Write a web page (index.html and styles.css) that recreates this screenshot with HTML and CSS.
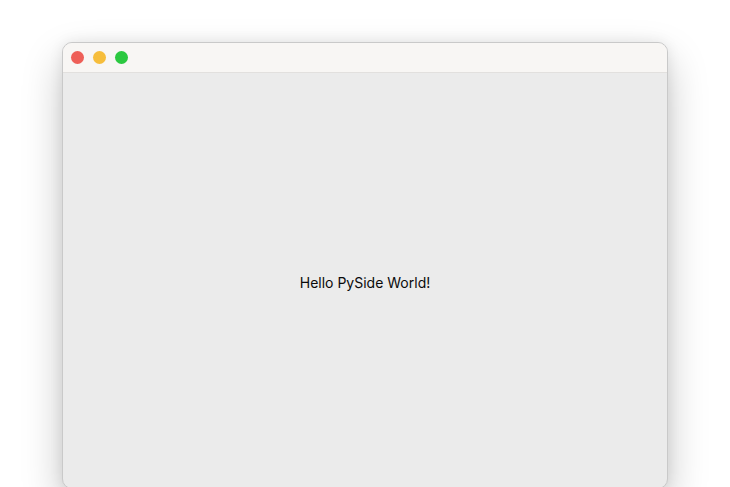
FILE: index.html
```html
<!DOCTYPE html>
<html>
<head>
<meta charset="utf-8">
<link rel="stylesheet" href="styles.css">
</head>
<body>
<div class="window">
  <div class="titlebar">
    <span class="light red"></span>
    <span class="light yellow"></span>
    <span class="light green"></span>
  </div>
  <div class="content">
    <div class="label">Hello PySide World!</div>
  </div>
</div>
</body>
</html>
```
FILE: styles.css
```css
html, body {
  margin: 0;
  height: 100%;
  overflow: hidden;
  background: #ffffff;
}
body {
  padding: 42px 0 0 62px;
  box-sizing: border-box;
  font-family: Inter, "Liberation Sans", sans-serif;
}
.window {
  width: 606px;
  height: 447px;
  box-sizing: border-box;
  border: 1px solid #c9c9c9;
  border-radius: 10px;
  overflow: hidden;
  display: flex;
  flex-direction: column;
  background: #ebebeb;
  box-shadow: 0 18px 40px rgba(0, 0, 0, 0.22), 0 0 14px rgba(0, 0, 0, 0.08);
}
.titlebar {
  height: 29px;
  flex: none;
  background: #f8f6f4;
  border-bottom: 1px solid #e2e0de;
  display: flex;
  align-items: center;
  gap: 9px;
  padding-left: 8px;
}
.light {
  width: 13px;
  height: 13px;
  border-radius: 50%;
  display: block;
}
.red { background: #ee5f58; }
.yellow { background: #f6bd3b; }
.green { background: #2bc840; }
.content {
  flex: 1;
  display: flex;
  align-items: center;
  justify-content: center;
  padding-top: 4px;
}
.label {
  font-size: 14px;
  color: #0a0a0a;
}
```
